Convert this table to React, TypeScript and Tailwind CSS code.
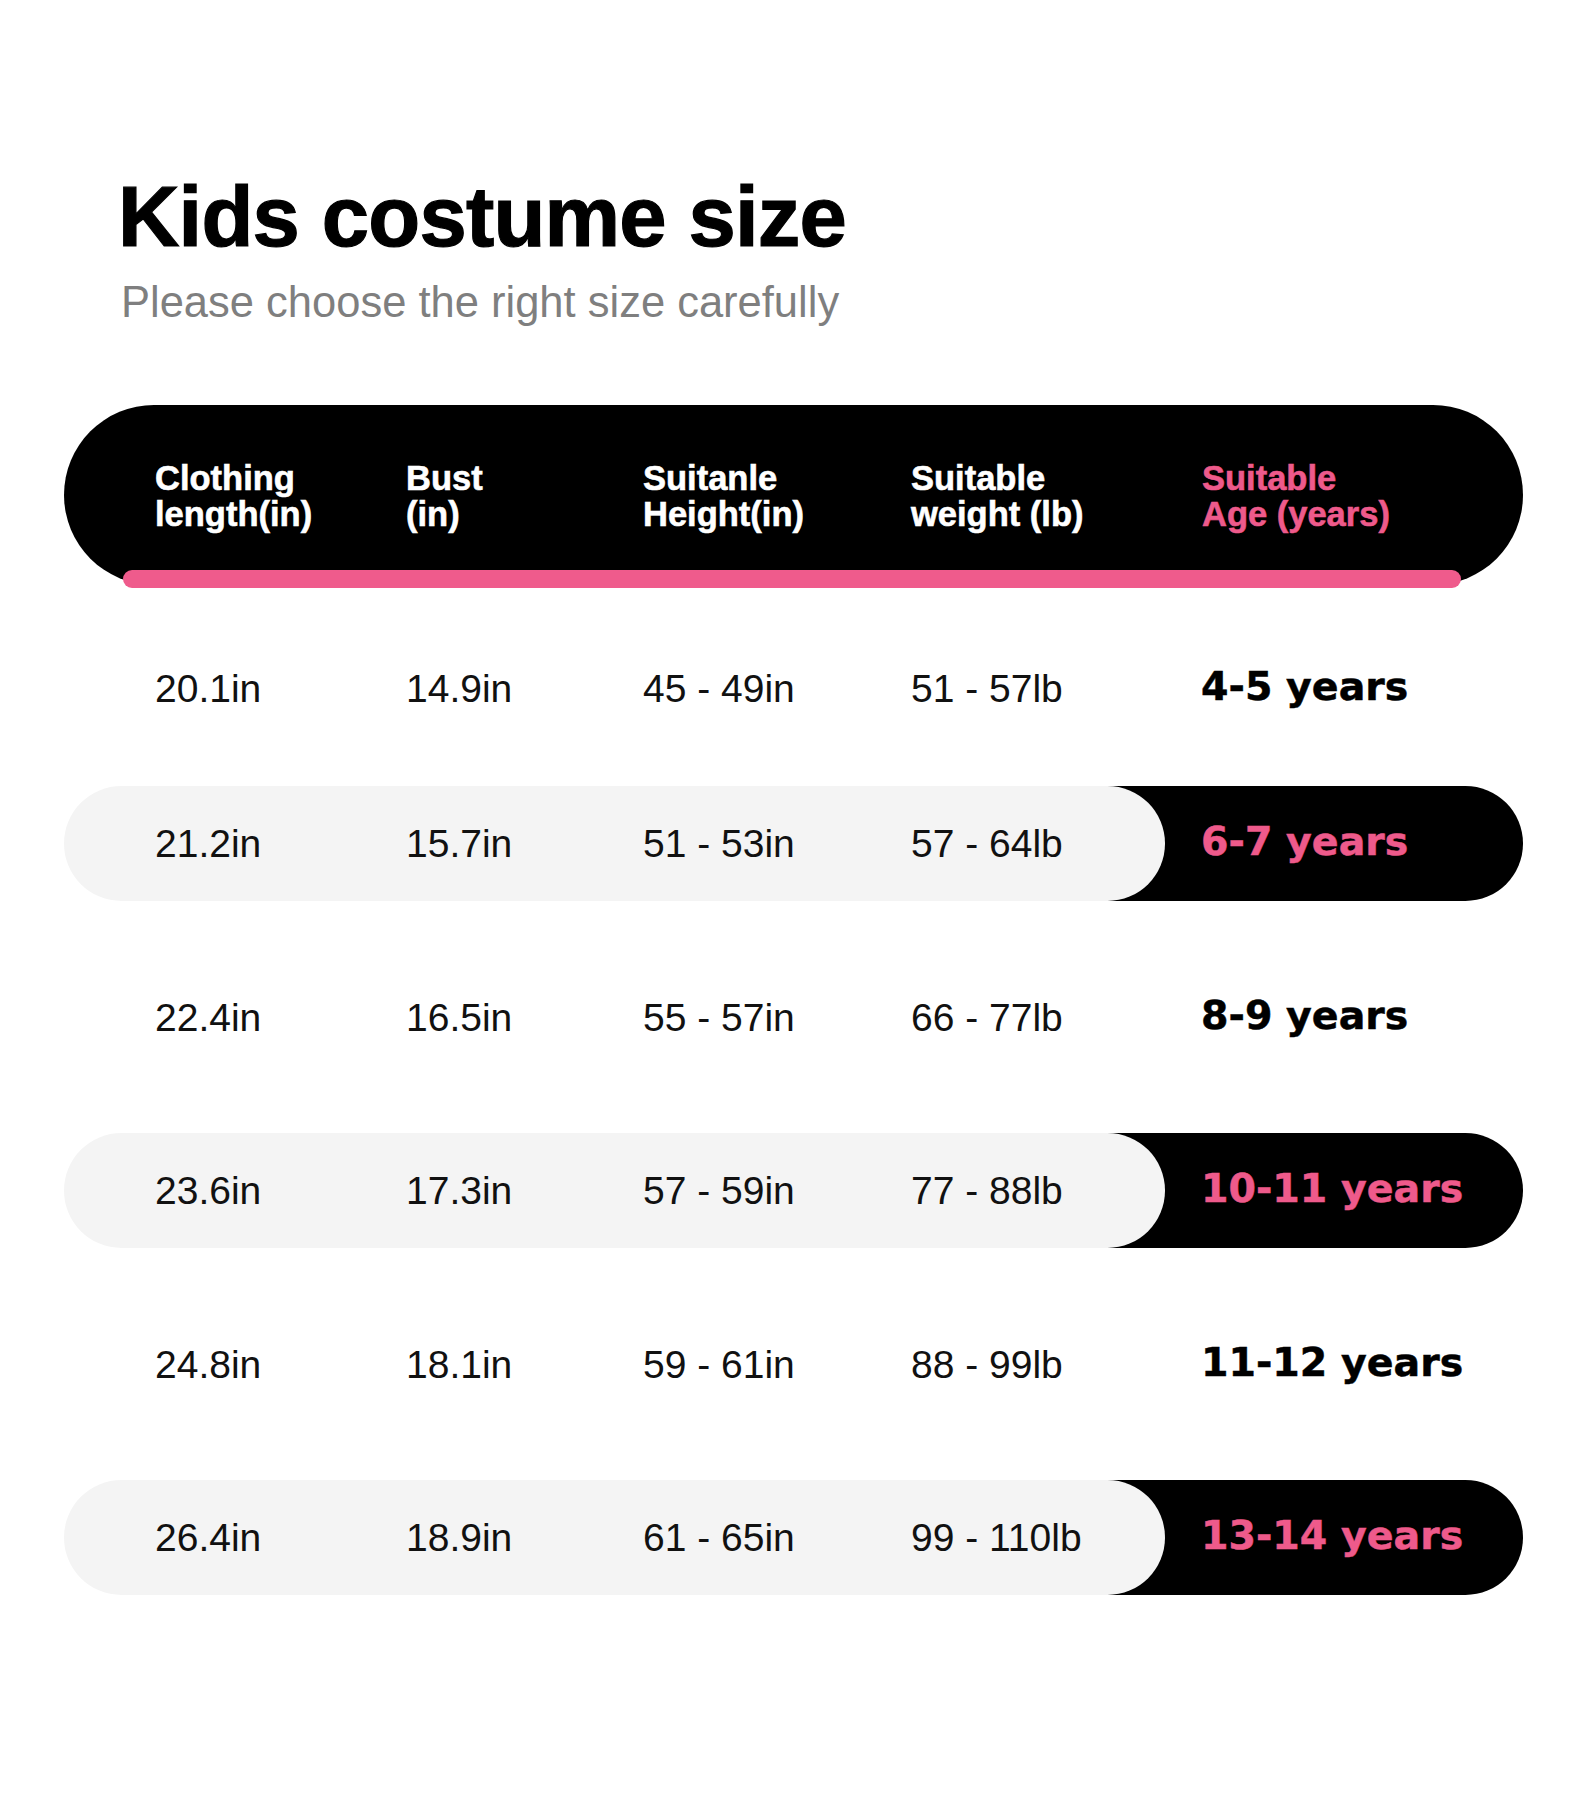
import React from "react";

const PINK = "text-[#ee5a8b]";

type Row = {
  c: string;
  b: string;
  h: string;
  w: string;
  a: string;
  hl: boolean;
  mt: string;
};

const rows: Row[] = [
  { c: "20.1in", b: "14.9in", h: "45 - 49in", w: "51 - 57lb", a: "4-5 years", hl: false, mt: "mt-[43px]" },
  { c: "21.2in", b: "15.7in", h: "51 - 53in", w: "57 - 64lb", a: "6-7 years", hl: true, mt: "mt-[40px]" },
  { c: "22.4in", b: "16.5in", h: "55 - 57in", w: "66 - 77lb", a: "8-9 years", hl: false, mt: "mt-[59px]" },
  { c: "23.6in", b: "17.3in", h: "57 - 59in", w: "77 - 88lb", a: "10-11 years", hl: true, mt: "mt-[58px]" },
  { c: "24.8in", b: "18.1in", h: "59 - 61in", w: "88 - 99lb", a: "11-12 years", hl: false, mt: "mt-[59px]" },
  { c: "26.4in", b: "18.9in", h: "61 - 65in", w: "99 - 110lb", a: "13-14 years", hl: true, mt: "mt-[58px]" },
];

const sans = "font-['Liberation_Sans',Arial,sans-serif]";
const heavy = "font-['DejaVu_Sans',sans-serif]";

function HeaderCell({ l1, l2, pink }: { l1: string; l2: string; pink?: boolean }) {
  return (
    <div
      className={`${sans} text-[34.5px] font-bold leading-[36px] ${
        pink ? `${PINK} [-webkit-text-stroke:0.6px_#ee5a8b]` : "text-white [-webkit-text-stroke:0.6px_#fff]"
      }`}
    >
      <div>{l1}</div>
      <div>{l2}</div>
    </div>
  );
}

export default function App() {
  return (
    <div className="h-[1800px] w-[1578px] bg-white">
      <div className="pt-[174px]">
        <h1
          className={`${sans} ml-[118px] text-[85px] font-bold leading-[85px] tracking-[-0.8px] text-black [-webkit-text-stroke:1.2px_#000]`}
        >
          Kids costume size
        </h1>
        <p className={`${sans} ml-[121px] mt-[21px] text-[43.5px] leading-[44px] text-[#7f7f7f]`}>
          Please choose the right size carefully
        </p>
      </div>

      <div className="ml-[64px] mt-[81px] w-[1459px]">
        {/* header */}
        <div className="flex h-[180px] items-center rounded-full bg-black pl-[91px] pt-[2px]">
          <div className="grid grid-cols-[251px_237px_268px_291px_1fr]">
            <HeaderCell l1="Clothing" l2="length(in)" />
            <HeaderCell l1="Bust" l2="(in)" />
            <HeaderCell l1="Suitanle" l2="Height(in)" />
            <HeaderCell l1="Suitable" l2="weight (lb)" />
            <HeaderCell l1="Suitable" l2="Age (years)" pink />
          </div>
        </div>
        <div className="relative -mt-[15px] ml-[59px] mr-[62px] h-[18px] rounded-full bg-[#ef5b8c]" />

        {rows.map((r) => (
          <div key={r.c} className={`flex h-[115px] ${r.mt}`}>
            <div
              className={`relative z-10 flex w-[1101px] shrink-0 items-center rounded-full pl-[91px] ${
                r.hl ? "bg-[#f4f4f4]" : "bg-transparent"
              }`}
            >
              <div className={`${sans} grid grid-cols-[251px_237px_268px_1fr] text-[39px] leading-[39px] text-[#111]`}>
                <span>{r.c}</span>
                <span>{r.b}</span>
                <span>{r.h}</span>
                <span>{r.w}</span>
              </div>
            </div>
            <div
              className={`-ml-[57px] flex flex-1 items-center rounded-r-full pb-[5px] pl-[93px] ${
                r.hl ? "bg-black" : "bg-transparent"
              }`}
            >
              <span
                className={`${heavy} text-[39.5px] font-bold leading-[40px] ${
                  r.hl ? `${PINK} [-webkit-text-stroke:0.5px_#ee5a8b]` : "text-black [-webkit-text-stroke:0.5px_#000]"
                }`}
              >
                {r.a}
              </span>
            </div>
          </div>
        ))}
      </div>
    </div>
  );
}
